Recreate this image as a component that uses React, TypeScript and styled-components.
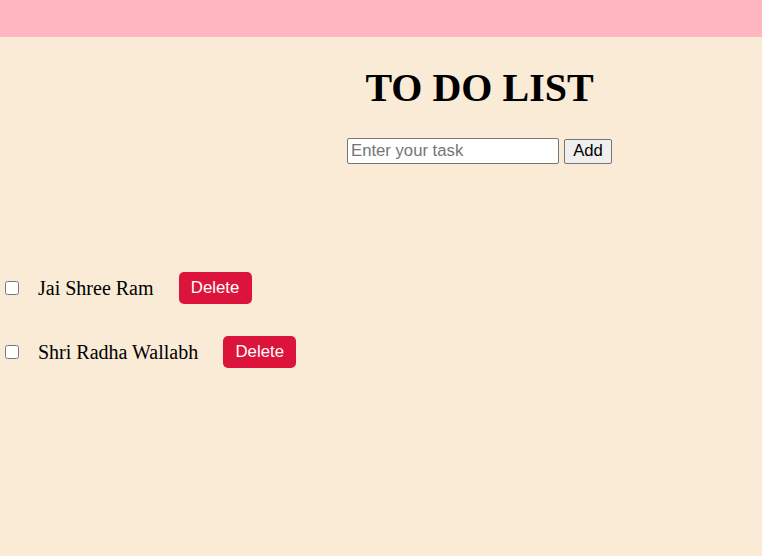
import React, { useState } from "react";
import styled, { createGlobalStyle } from "styled-components";

const GlobalStyle = createGlobalStyle`
  html, body {
    margin: 0;
    padding: 0;
    background: #faebd7;
  }
  body {
    font-family: "Liberation Serif", "Times New Roman", serif;
    min-height: 556px;
  }
`;

const TopBar = styled.div`
  height: 37px;
  background: #ffb6c1;
`;

const Header = styled.div`
  margin-left: 197px;
  display: flex;
  flex-direction: column;
  align-items: center;
`;

const Title = styled.h1`
  margin: 29px 0 0;
  font-size: 40px;
  font-weight: bold;
  line-height: 44px;
  color: #000;
`;

const Form = styled.div`
  margin-top: 28px;
  display: flex;
  gap: 5px;
  align-items: center;
`;

const TaskInput = styled.input`
  box-sizing: border-box;
  width: 212px;
  height: 26px;
  padding: 1px 3px;
  font-family: "Liberation Sans", Arial, sans-serif;
  font-size: 16.7px;
  border: 1px solid #767676;
  border-radius: 2px;
  background: #fff;
  &::placeholder {
    color: #757575;
  }
`;

const AddButton = styled.button`
  box-sizing: border-box;
  height: 25px;
  width: 48px;
  padding: 0;
  font-family: "Liberation Sans", Arial, sans-serif;
  font-size: 16.7px;
  color: #000;
  background: #efefef;
  border: 1px solid #767676;
  border-radius: 2px;
`;

const List = styled.ul`
  list-style: none;
  margin: 108px 0 0;
  padding: 0;
  display: flex;
  flex-direction: column;
  gap: 32px;
`;

const Item = styled.li`
  display: flex;
  align-items: center;
  height: 32px;
`;

const Check = styled.input`
  width: 14px;
  height: 14px;
  margin: 0 19px 0 5px;
`;

const TaskText = styled.span`
  font-size: 20px;
  color: #000;
  margin-right: 25px;
`;

const DeleteButton = styled.button`
  box-sizing: border-box;
  height: 32px;
  width: 73px;
  padding: 0;
  border: none;
  border-radius: 5px;
  background: #dc143c;
  color: #fff;
  font-family: "Liberation Sans", Arial, sans-serif;
  font-size: 16.8px;
`;

export default function App() {
  const [tasks, setTasks] = useState(["Jai Shree Ram", "Shri Radha Wallabh"]);
  const [value, setValue] = useState("");
  return (
    <>
      <GlobalStyle />
      <TopBar />
      <Header>
        <Title>TO DO LIST</Title>
        <Form>
          <TaskInput
            placeholder="Enter your task"
            value={value}
            onChange={(e) => setValue(e.target.value)}
          />
          <AddButton
            onClick={() => {
              if (value.trim()) {
                setTasks([...tasks, value.trim()]);
                setValue("");
              }
            }}
          >
            Add
          </AddButton>
        </Form>
      </Header>
      <List>
        {tasks.map((t, i) => (
          <Item key={i}>
            <Check type="checkbox" />
            <TaskText>{t}</TaskText>
            <DeleteButton onClick={() => setTasks(tasks.filter((_, j) => j !== i))}>
              Delete
            </DeleteButton>
          </Item>
        ))}
      </List>
    </>
  );
}
